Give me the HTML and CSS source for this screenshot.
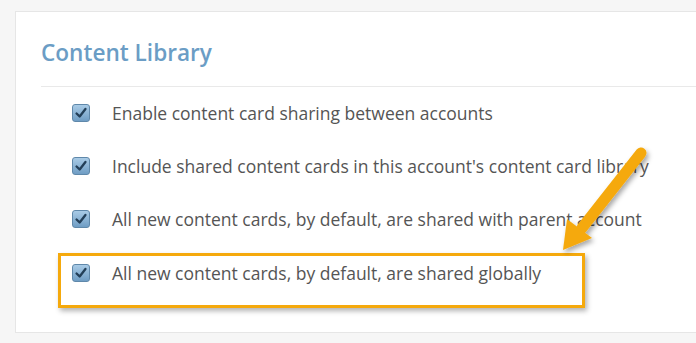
FILE: index.html
```html
<!DOCTYPE html>
<html lang="en">
<head>
  <meta charset="UTF-8">
  <meta name="viewport" content="width=device-width, initial-scale=1.0">
  <title>Content Library</title>
  <link rel="stylesheet" href="styles.css">
</head>
<body>
  <div class="panel">
    <h2 class="panel-title">Content Library</h2>
    <ul class="options">
      <li class="option">
        <span class="check"><svg viewBox="0 0 18 18"><path d="M4 9.5 L7.5 13 L14 4.5"/></svg></span>
        <span class="label">Enable content card sharing between accounts</span>
      </li>
      <li class="option">
        <span class="check"><svg viewBox="0 0 18 18"><path d="M4 9.5 L7.5 13 L14 4.5"/></svg></span>
        <span class="label">Include shared content cards in this account's content card library</span>
      </li>
      <li class="option">
        <span class="check"><svg viewBox="0 0 18 18"><path d="M4 9.5 L7.5 13 L14 4.5"/></svg></span>
        <span class="label">All new content cards, by default, are shared with parent account</span>
      </li>
      <li class="option highlight">
        <span class="check"><svg viewBox="0 0 18 18"><path d="M4 9.5 L7.5 13 L14 4.5"/></svg></span>
        <span class="label">All new content cards, by default, are shared globally</span>
      </li>
    </ul>
  </div>

  <!-- annotation arrow -->
  <svg class="arrow" width="696" height="343" viewBox="0 0 696 343">
    <defs>
      <filter id="shadow" x="-20%" y="-20%" width="140%" height="140%">
        <feDropShadow dx="2" dy="3" stdDeviation="2.5" flood-color="#000" flood-opacity="0.35"/>
      </filter>
    </defs>
    <g filter="url(#shadow)">
      <line x1="641" y1="153" x2="582" y2="228" stroke="#f5a90c" stroke-width="11" stroke-linecap="round"/>
      <polygon points="563,250 567,219 592,238" fill="#f5a90c"/>
    </g>
  </svg>
</body>
</html>
```

FILE: styles.css
```css
/* Page */
body {
margin: 0;
background: #f6f6f6;
font-family: "Open Sans", "Noto Sans", sans-serif;
color: #555;
overflow: hidden;
}

/* Card */
.panel {
width: 681px;
height: 322px;
margin: 11px 0 0 15px;
background: #fff;
border: 1px solid #e6e6e6;
border-right: none;
box-sizing: border-box;
padding: 0 0 0 25px;
}

.panel-title {
margin: 0;
padding: 25px 0 0 0;
height: 49px;
font-size: 22.6px;
font-weight: 600;
color: #6b9dc5;
border-bottom: 1px solid #e9e9e9;
}

.options {
list-style: none;
margin: -1px 0 0 0;
padding: 0;
}

.option {
display: flex;
align-items: center;
height: 53px;
padding-left: 31px;
font-size: 17.5px;
}

.label {
margin-left: 22px;
white-space: nowrap;
}

/* Checkbox */
.check {
flex: none;
width: 18px;
height: 18px;
border-radius: 3px;
border: 1px solid #5f88aa;
box-sizing: border-box;
background: linear-gradient(#a9cbe6, #6f9dc4);
display: flex;
}

.check svg {
width: 16px;
height: 16px;
}

.check path {
fill: none;
stroke: #233f58;
stroke-width: 2.6;
stroke-linecap: round;
stroke-linejoin: round;
}

/* Highlighted row */
.highlight {
margin: 8px 0 0 17px;
width: 527px;
height: 55px;
padding-left: 11px;
padding-bottom: 15px;
border: 3px solid #f5a90c;
box-sizing: border-box;
box-shadow: 2px 3px 5px rgba(0, 0, 0, 0.3);
}

.arrow {
position: absolute;
left: 0;
top: 0;
}
```
